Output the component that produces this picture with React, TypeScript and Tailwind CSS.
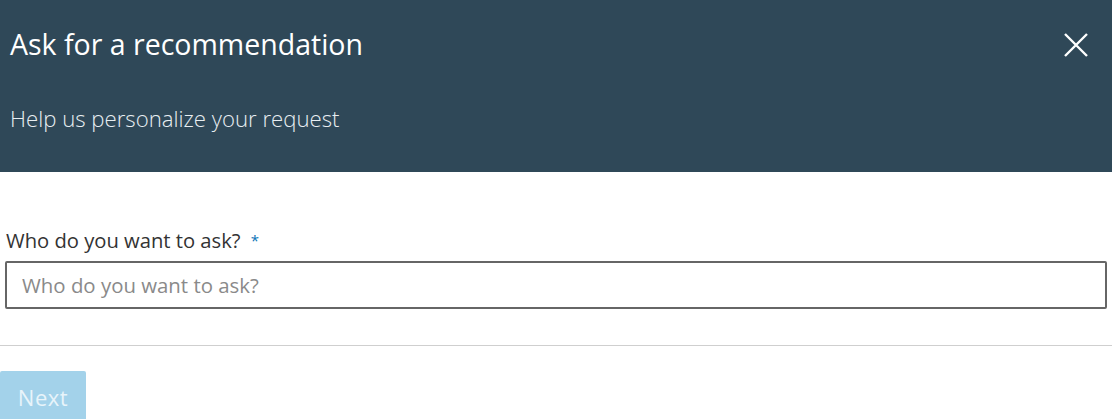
const App = () => {
  return (
    <div className="w-[1112px] h-[419px] overflow-hidden bg-white font-['Open_Sans',sans-serif]">
      <div className="h-[172px] bg-[#2f4858] text-white pl-[10px] pr-[24px]">
        <div className="flex items-center justify-between pt-[24px]">
          <h1 className="text-[28.5px] leading-[40px] font-normal">Ask for a recommendation</h1>
          <svg width="24" height="24" viewBox="0 0 24 24" className="mt-[2px]">
            <path d="M1 1 L23 23 M23 1 L1 23" stroke="white" strokeWidth="2.4" />
          </svg>
        </div>
        <p className="mt-[40px] text-[22.2px] leading-[30px] text-[#e8eef2] font-light">Help us personalize your request</p>
      </div>

      <div className="pt-[55px] px-[5px]">
        <label className="block pl-[1px] text-[20.2px] leading-[26px] text-[#333]">
          Who do you want to ask? <span className="ml-[5px] text-[#0a73b7] text-[15px] align-top">*</span>
        </label>
        <div className="mt-[8px] h-[48px] border-2 border-[#666] rounded-[2px] flex items-center pl-[15px]">
          <input
            className="w-full outline-none font-['Open_Sans',sans-serif] text-[20.4px] placeholder:text-[#8a8a8a] text-[#333]"
            placeholder="Who do you want to ask?"
          />
        </div>
      </div>

      <div className="mt-[36px] border-t border-[#cfcfcf]" />

      <div className="pt-[25px]">
        <button className="w-[86px] h-[52px] bg-[#a3d2ea] rounded-[2px] text-[#e8f4fa] text-[22px] tracking-[0.5px] font-normal font-['Open_Sans',sans-serif]">
          Next
        </button>
      </div>
    </div>
  );
};

export default App;
